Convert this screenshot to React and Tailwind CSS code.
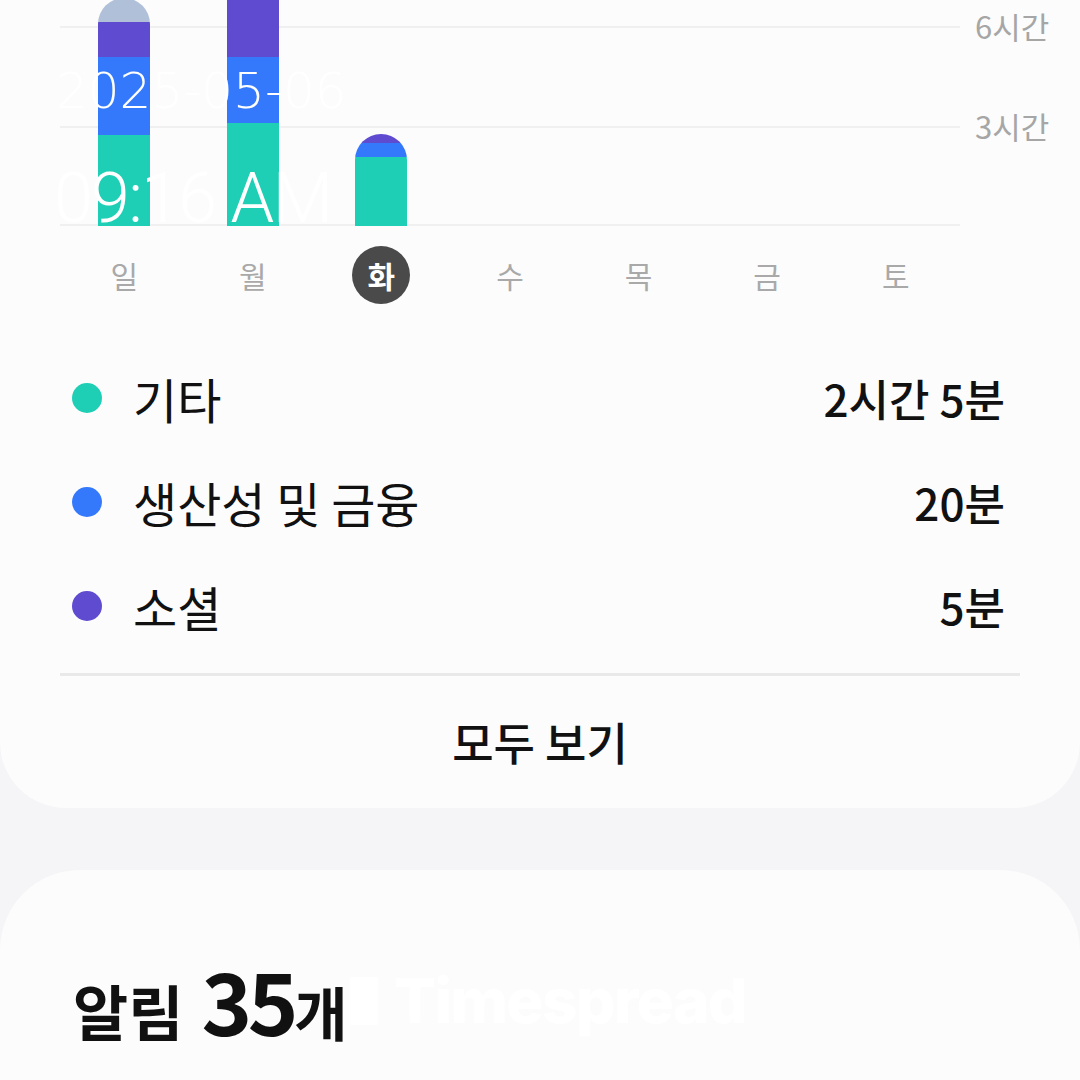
import React from 'react'

const KR = "font-['Noto_Sans_CJK_KR','Noto_Sans',sans-serif]"

const DAYS = ['일', '월', '화', '수', '목', '금', '토']

// segment heights from the bottom: teal, blue, purple, grey
const BARS = [
  [91, 78, 35, 24],
  [103, 66, 90, 0],
  [69, 14, 9, 0],
  null, null, null, null,
]

const LEGEND = [
  { color: 'bg-[#1ecfb6]', label: '기타', value: '2시간 5분' },
  { color: 'bg-[#3479fb]', label: '생산성 및 금융', value: '20분' },
  { color: 'bg-[#5e4bd0]', label: '소셜', value: '5분' },
]

function Bar({ seg }) {
  if (!seg) return <div className="w-[52px]" />
  const [teal, blue, purple, grey] = seg
  return (
    <div className="w-[52px] shrink-0 flex flex-col-reverse rounded-t-[26px] overflow-hidden">
      <div className="shrink-0 bg-[#1ecfb6]" style={{ height: teal }} />
      <div className="shrink-0 bg-[#3479fb]" style={{ height: blue }} />
      <div className="shrink-0 bg-[#5e4bd0]" style={{ height: purple }} />
      {grey > 0 && <div className="shrink-0 bg-[#b0c0d8]" style={{ height: grey }} />}
    </div>
  )
}

export default function App() {
  return (
    <div className={`relative w-[1080px] h-[1080px] overflow-hidden bg-[#f5f5f7] flex flex-col ${KR}`}>
      {/* usage card */}
      <div className="h-[808px] shrink-0 bg-[#fcfcfc] rounded-b-[66px] flex flex-col">
        <div className="flex">
          <div className="relative ml-[60px] w-[900px] h-[226px] overflow-hidden">
            <div className="absolute left-0 right-0 top-[26px] h-[2px] bg-[#f0f0f0]" />
            <div className="absolute left-0 right-0 top-[126px] h-[2px] bg-[#f0f0f0]" />
            <div className="absolute left-0 right-0 bottom-0 h-[2px] bg-[#f0f0f0]" />
            <div className="relative grid grid-cols-7 grid-rows-1 h-full">
              {BARS.map((b, i) => (
                <div key={i} className="flex justify-center items-end h-[226px]">
                  <Bar seg={b} />
                </div>
              ))}
            </div>
          </div>
          <div className="ml-[15px] flex flex-col text-[31px] text-[#a6a6a6] leading-[40px]">
            <span className="mt-[6px]">6시간</span>
            <span className="mt-[60px]">3시간</span>
          </div>
        </div>

        <div className="ml-[60px] w-[900px] grid grid-cols-7 mt-[20px]">
          {DAYS.map((d, i) => (
            <div key={d} className="flex justify-center">
              {i === 2 ? (
                <div className="w-[58px] h-[58px] rounded-full bg-[#4a4a4a] flex items-center justify-center text-[30px] font-bold text-white">
                  {d}
                </div>
              ) : (
                <div className="h-[58px] flex items-center text-[30px] text-[#a9a9a9]">{d}</div>
              )}
            </div>
          ))}
        </div>

        <div className="mt-[42px] flex flex-col">
          {LEGEND.map(r => (
            <div key={r.label} className="h-[104px] flex items-center pl-[72px] pr-[75px]">
              <span className={`w-[30px] h-[30px] rounded-full ${r.color}`} />
              <span className="ml-[31px] text-[48px] text-[#111]">{r.label}</span>
              <span className="ml-auto text-[44px] font-medium text-[#111]">{r.value}</span>
            </div>
          ))}
        </div>

        <div className="mt-[15px] mx-[60px] h-[3px] bg-[#e9e9e9]" />

        <div className="flex-1 flex items-center justify-center text-[45px] font-medium text-[#111]">
          모두 보기
        </div>
      </div>

      {/* notifications card */}
      <div className="mt-[62px] flex-1 bg-[#fcfcfc] rounded-t-[80px] pl-[73px] pt-[86px]">
        <div className="flex items-baseline font-bold text-[#111] leading-none">
          <span className="text-[60px]">알림</span>
          <span className="ml-[18px] text-[86px] tracking-tighter">35</span>
          <span className="text-[58px]">개</span>
        </div>
      </div>

      {/* timestamp overlay */}
      <div className="absolute left-[56px] top-[66px] text-[50px] leading-none text-white font-['DejaVu_Sans',sans-serif] font-extralight">
        2025-05-06
      </div>
      <div className="absolute left-[54px] top-[163px] text-[70px] leading-none text-white font-['Roboto',sans-serif] font-light tracking-tight">
        09:16 AM
      </div>

      {/* watermark */}
      <div className="absolute left-[350px] top-[970px] flex items-center gap-[16px] text-white">
        <svg width="28" height="48" viewBox="0 0 28 48">
          <rect x="0" y="0" width="28" height="48" rx="2" fill="#fff" />
        </svg>
        <span className="text-[62px] font-extrabold leading-none tracking-tight font-['Inter',sans-serif]">Timespread</span>
      </div>
    </div>
  )
}
